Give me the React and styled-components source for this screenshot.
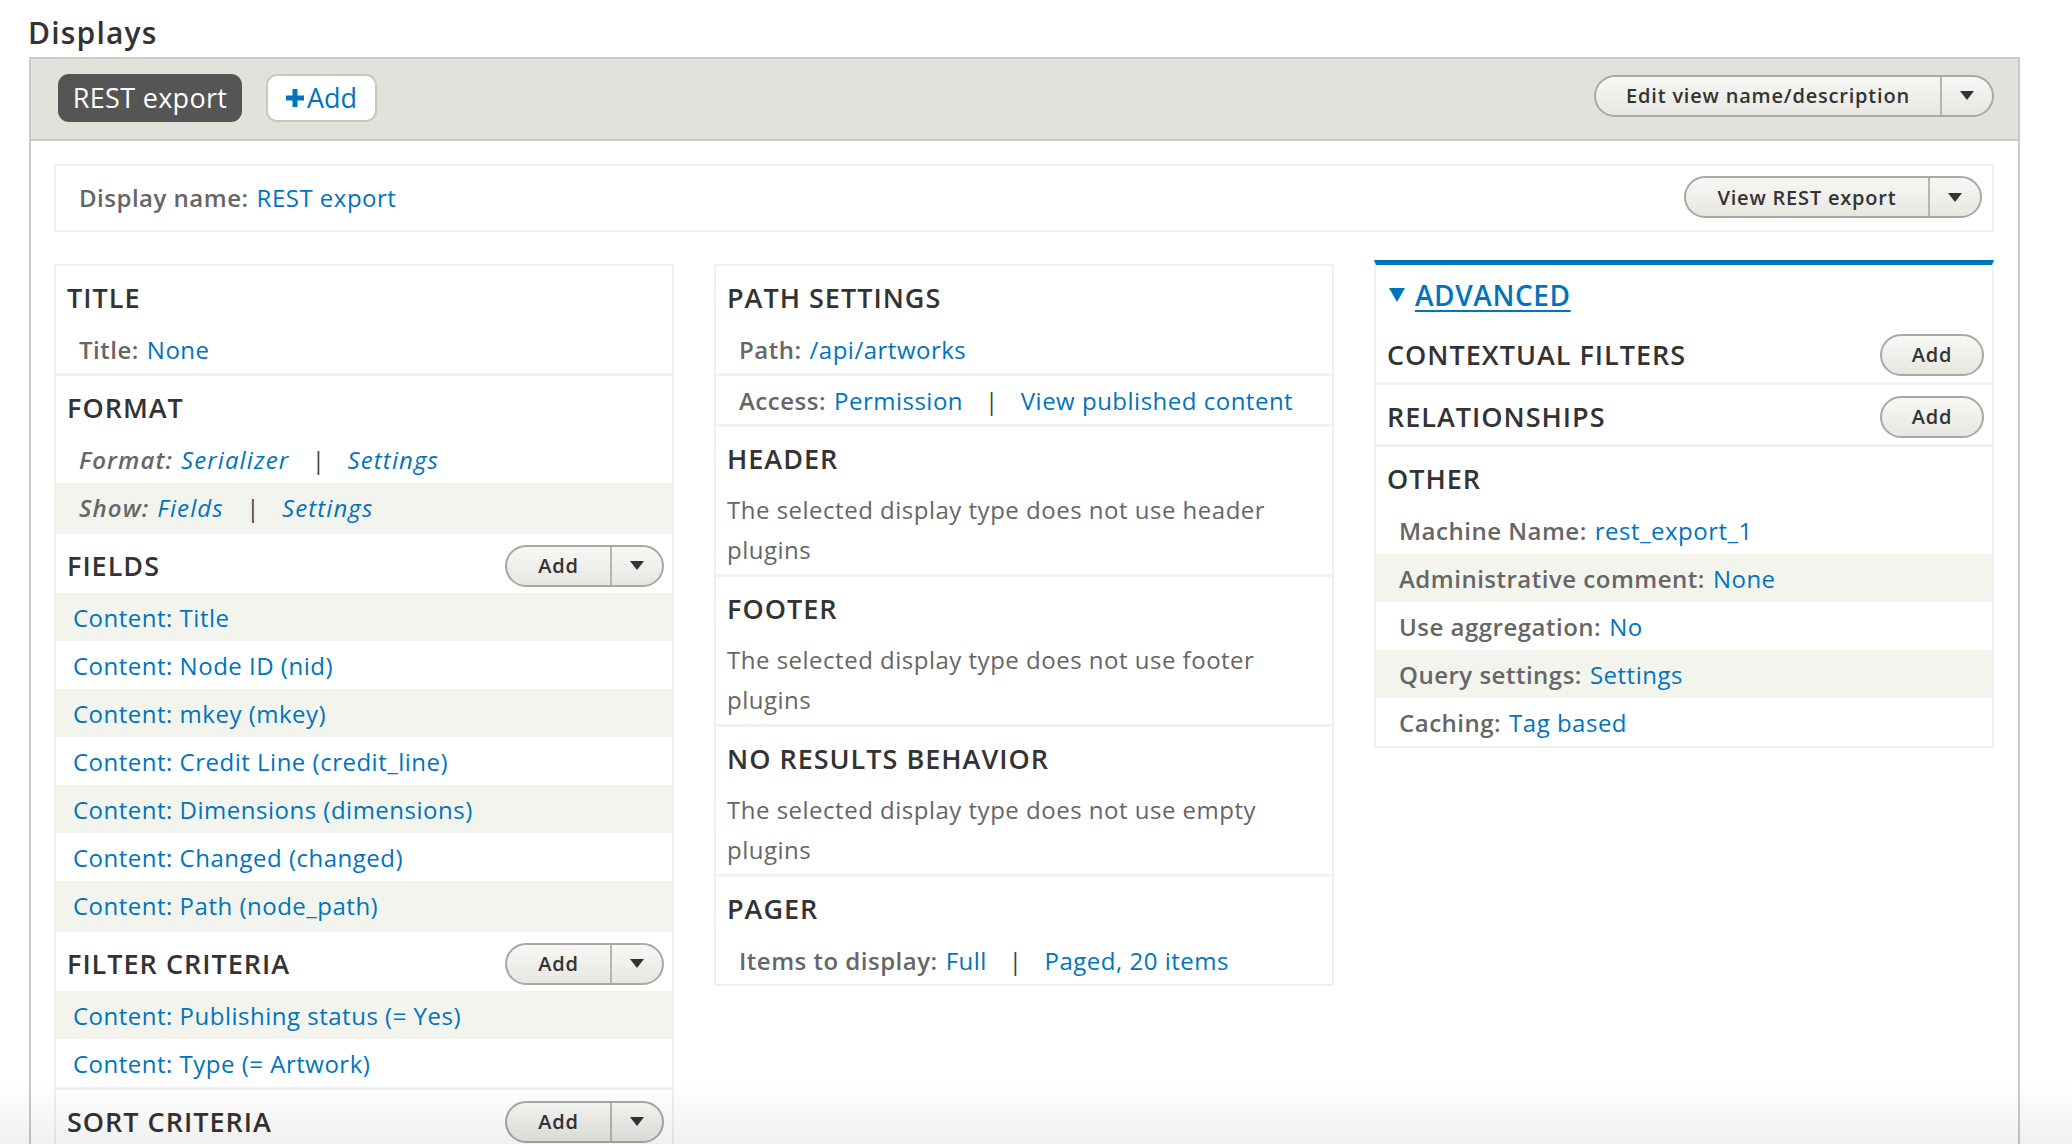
import React from 'react'
import styled, { createGlobalStyle } from 'styled-components'

const GlobalStyle = createGlobalStyle`
  html, body {
    margin: 0;
    padding: 0;
    background: #fff;
  }
  body {
    font-family: 'Open Sans', 'Liberation Sans', sans-serif;
    color: #333;
    letter-spacing: 0.5px;
    overflow: hidden;
  }
`

const blue = '#0074bd'

function Caret() {
    return (
        <svg width="14" height="9" viewBox="0 0 14 9">
            <path d="M0 0 L14 0 L7 9 Z" fill="#333" />
        </svg>
    )
}

function SplitButton({ label, main, lift }) {
    return (
        <Split $lift={lift}>
            <SplitMain $w={main}>{label}</SplitMain>
            <SplitArrow><Caret /></SplitArrow>
        </Split>
    )
}

function Setting({ label, links, gray, italic }) {
    return (
        <SettingRow $gray={gray} $italic={italic}>
            <Label>{label}</Label>
            {links.map((l, i) => (
                <React.Fragment key={i}>
                    {i > 0 && <Pipe>|</Pipe>}
                    <Link>{l}</Link>
                </React.Fragment>
            ))}
        </SettingRow>
    )
}

function Bucket({ title, add, children }) {
    return (
        <BucketBox>
            <BucketHead>
                <BucketTitle>{title}</BucketTitle>
                {add === 'split' && <SplitButton label="Add" main={103} />}
                {add === 'single' && <SmallButton>Add</SmallButton>}
            </BucketHead>
            {children}
        </BucketBox>
    )
}

const fields = [
    'Content: Title',
    'Content: Node ID (nid)',
    'Content: mkey (mkey)',
    'Content: Credit Line (credit_line)',
    'Content: Dimensions (dimensions)',
    'Content: Changed (changed)',
    'Content: Path (node_path)',
]

const filters = [
    'Content: Publishing status (= Yes)',
    'Content: Type (= Artwork)',
]

export default function App() {
    return (
        <Page>
            <GlobalStyle />
            <Heading>Displays</Heading>
            <Outer>
                <TabBar>
                    <Tabs>
                        <ActiveTab>REST export</ActiveTab>
                        <AddTab>
                            <svg width="18" height="18" viewBox="0 0 18 18">
                                <path d="M6.5 0 H11.5 V6.5 H18 V11.5 H11.5 V18 H6.5 V11.5 H0 V6.5 H6.5 Z" fill={blue} />
                            </svg>
                            Add
                        </AddTab>
                    </Tabs>
                    <SplitButton label="Edit view name/description" main={344} lift />
                </TabBar>
                <Body>
                    <DisplayName>
                        <div>
                            <Label>Display name:</Label>
                            <Link>REST export</Link>
                        </div>
                        <SplitButton label="View REST export" main={242} />
                    </DisplayName>
                    <Columns>
                        <Column>
                            <Bucket title="TITLE">
                                <Setting label="Title:" links={['None']} />
                            </Bucket>
                            <Bucket title="FORMAT">
                                <Setting italic label="Format:" links={['Serializer', 'Settings']} />
                                <Setting italic gray label="Show:" links={['Fields', 'Settings']} />
                            </Bucket>
                            <Bucket title="FIELDS" add="split">
                                {fields.map((f, i) => (
                                    <ItemRow key={f} $gray={i % 2 === 0}>{f}</ItemRow>
                                ))}
                            </Bucket>
                            <Bucket title="FILTER CRITERIA" add="split">
                                {filters.map((f, i) => (
                                    <ItemRow key={f} $gray={i % 2 === 0}>{f}</ItemRow>
                                ))}
                            </Bucket>
                            <Bucket title="SORT CRITERIA" add="split" />
                        </Column>
                        <Column>
                            <Bucket title="PATH SETTINGS">
                                <Setting label="Path:" links={['/api/artworks']} />
                            </Bucket>
                            <BucketBox>
                                <Setting label="Access:" links={['Permission', 'View published content']} />
                            </BucketBox>
                            <Bucket title="HEADER">
                                <Note>The selected display type does not use header plugins</Note>
                            </Bucket>
                            <Bucket title="FOOTER">
                                <Note>The selected display type does not use footer plugins</Note>
                            </Bucket>
                            <Bucket title="NO RESULTS BEHAVIOR">
                                <Note>The selected display type does not use empty plugins</Note>
                            </Bucket>
                            <Bucket title="PAGER">
                                <Setting label="Items to display:" links={['Full', 'Paged, 20 items']} />
                            </Bucket>
                        </Column>
                        <Column $advanced>
                            <AdvancedHead>
                                <svg width="16" height="14" viewBox="0 0 16 14">
                                    <path d="M0 0 L16 0 L8 14 Z" fill={blue} />
                                </svg>
                                <AdvancedLink>ADVANCED</AdvancedLink>
                            </AdvancedHead>
                            <Bucket title="CONTEXTUAL FILTERS" add="single" />
                            <Bucket title="RELATIONSHIPS" add="single" />
                            <Bucket title="OTHER">
                                <Setting label="Machine Name:" links={['rest_export_1']} />
                                <Setting gray label="Administrative comment:" links={['None']} />
                                <Setting label="Use aggregation:" links={['No']} />
                                <Setting gray label="Query settings:" links={['Settings']} />
                                <Setting label="Caching:" links={['Tag based']} />
                            </Bucket>
                        </Column>
                    </Columns>
                </Body>
            </Outer>
            <BottomFade />
        </Page>
    )
}

const Page = styled.div`
    padding: 0 52px 0 29px;
    height: 1144px;
    box-sizing: border-box;
`

const Heading = styled.h2`
    margin: 0 0 0 -1px;
    padding-top: 15px;
    height: 57px;
    box-sizing: border-box;
    font-size: 30px;
    line-height: 36px;
    font-weight: 600;
    letter-spacing: 1.2px;
    color: #333;
`

const Outer = styled.div`
    border: 2px solid #c9c9c5;
    border-bottom: none;
    background: #fff;
`

const TabBar = styled.div`
    height: 82px;
    box-sizing: border-box;
    padding: 0 24px 3px 27px;
    background: #e2e2dc;
    border-bottom: 2px solid #c9c9c5;
    display: flex;
    align-items: center;
    justify-content: space-between;
`

const Tabs = styled.div`
    display: flex;
    align-items: center;
    gap: 24px;
`

const ActiveTab = styled.div`
    height: 48px;
    width: 184px;
    box-sizing: border-box;
    background: #555;
    color: #fff;
    border-radius: 11px;
    display: flex;
    align-items: center;
    justify-content: center;
    font-size: 27px;
    letter-spacing: 0.3px;
`

const AddTab = styled.div`
    height: 48px;
    width: 111px;
    box-sizing: border-box;
    background: #fff;
    border: 2px solid #c8c8c4;
    border-radius: 11px;
    color: ${blue};
    display: flex;
    align-items: center;
    justify-content: center;
    gap: 3px;
    font-size: 27px;
    letter-spacing: 0;
`

const Split = styled.div`
    display: flex;
    height: 42px;
    box-sizing: border-box;
    margin-bottom: ${p => (p.$lift ? '4px' : '0')};
    border: 2px solid #a8a8a6;
    border-radius: 21px;
    background: linear-gradient(#f7f7f4, #e7e7e2);
    overflow: hidden;
`

const SplitMain = styled.div`
    width: ${p => p.$w}px;
    display: flex;
    align-items: center;
    justify-content: center;
    font-size: 20px;
    font-weight: 600;
    letter-spacing: 0.8px;
    color: #333;
    border-right: 2px solid #b5b5b2;
`

const SplitArrow = styled.div`
    width: 50px;
    display: flex;
    align-items: center;
    justify-content: center;
`

const SmallButton = styled.div`
    width: 104px;
    height: 42px;
    box-sizing: border-box;
    border: 2px solid #a8a8a6;
    border-radius: 21px;
    background: linear-gradient(#f7f7f4, #e7e7e2);
    display: flex;
    align-items: center;
    justify-content: center;
    font-size: 20px;
    font-weight: 600;
    letter-spacing: 0.8px;
    color: #333;
`

const Body = styled.div`
    padding: 23px 24px 0 23px;
`

const DisplayName = styled.div`
    height: 68px;
    box-sizing: border-box;
    border: 2px solid #efefef;
    display: flex;
    align-items: center;
    justify-content: space-between;
    padding: 0 10px 2px 23px;
    font-size: 24px;
`

const Columns = styled.div`
    margin-top: 32px;
    display: grid;
    grid-template-columns: 1fr 1fr 1fr;
    gap: 40px;
    align-items: start;
`

const Column = styled.div`
    border: 2px solid #efefef;
    border-top: ${p => (p.$advanced ? `5px solid ${blue}` : '2px solid #efefef')};
    margin-top: ${p => (p.$advanced ? '-4px' : '0')};
    background: #fff;
`

const BucketBox = styled.div`
    border-bottom: 3px solid #f2f2f2;
    &:last-child {
        border-bottom: none;
    }
`

const BucketHead = styled.div`
    height: 59px;
    display: flex;
    align-items: center;
    justify-content: space-between;
    padding: 4px 8px 0 11px;
    box-sizing: border-box;
`

const BucketTitle = styled.div`
    font-size: 27px;
    font-weight: 600;
    letter-spacing: 1px;
    color: #333;
`

const SettingRow = styled.div`
    height: 48px;
    display: flex;
    align-items: center;
    padding-left: 23px;
    font-size: 24px;
    font-style: ${p => (p.$italic ? 'italic' : 'normal')};
    letter-spacing: ${p => (p.$italic ? '1.1px' : '0.5px')};
    background: ${p => (p.$gray ? '#f3f4ee' : '#fff')};
`

const Label = styled.span`
    color: #666;
    font-weight: 600;
    margin-right: 8px;
`

const Link = styled.span`
    color: ${blue};
`

const Pipe = styled.span`
    color: #444;
    margin: 0 22px;
`

const ItemRow = styled.div`
    height: 48px;
    display: flex;
    align-items: center;
    padding-left: 17px;
    font-size: 24px;
    color: ${blue};
    background: ${p => (p.$gray ? '#f3f4ee' : '#fff')};
`

const Note = styled.p`
    margin: 0;
    padding: 4px 40px 4px 11px;
    font-size: 24px;
    line-height: 40px;
    color: #666;
`

const AdvancedHead = styled.div`
    height: 58px;
    display: flex;
    align-items: center;
    gap: 10px;
    padding: 2px 0 0 13px;
    box-sizing: border-box;
`

const AdvancedLink = styled.span`
    font-size: 28px;
    font-weight: 600;
    letter-spacing: 0.6px;
    color: ${blue};
    text-decoration: underline;
    text-underline-offset: 4px;
    text-decoration-thickness: 2px;
`

const BottomFade = styled.div`
    position: fixed;
    left: 0;
    right: 0;
    bottom: 0;
    height: 60px;
    background: linear-gradient(rgba(0, 0, 0, 0), rgba(0, 0, 0, 0.06));
    pointer-events: none;
`
